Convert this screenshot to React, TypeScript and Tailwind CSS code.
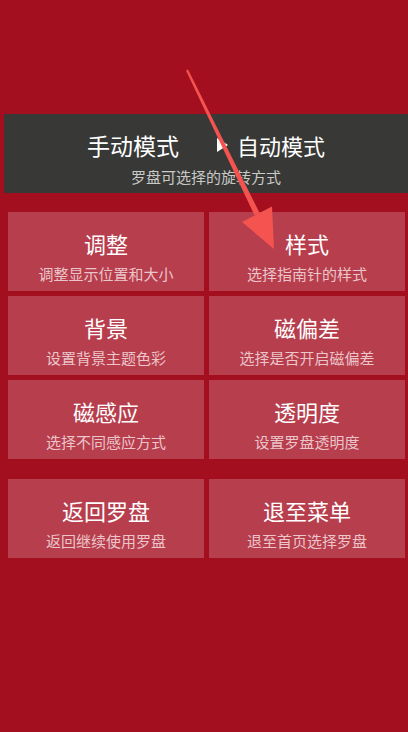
import React from "react";

const cards = [
  { t: "调整", s: "调整显示位置和大小" },
  { t: "样式", s: "选择指南针的样式" },
  { t: "背景", s: "设置背景主题色彩" },
  { t: "磁偏差", s: "选择是否开启磁偏差" },
  { t: "磁感应", s: "选择不同感应方式" },
  { t: "透明度", s: "设置罗盘透明度" },
];

const bottom = [
  { t: "返回罗盘", s: "返回继续使用罗盘" },
  { t: "退至菜单", s: "退至首页选择罗盘" },
];

function Card({ t, s }: { t: string; s: string }) {
  return (
    <div className="h-[79px] bg-[#b73e4d] flex flex-col items-center pt-[17px]">
      <div className="text-[22px] leading-[28px] text-white">{t}</div>
      <div className="mt-[7px] text-[15px] leading-[20px] text-[#ebc5ca]">{s}</div>
    </div>
  );
}

export default function App() {
  return (
    <div
      className="relative w-[408px] h-[732px] bg-[#a30f1f] overflow-hidden"
      style={{ fontFamily: '"Noto Sans CJK SC", "Noto Sans", sans-serif' }}
    >
      <div className="pt-[114px] pl-[4px]">
        <div className="h-[79px] bg-[#383836] flex flex-col items-center pt-[17px]">
          <div className="flex items-center h-[28px]">
            <span className="text-[23px] leading-[28px] text-white">手动模式</span>
            <svg className="ml-[38px]" width="11" height="14" viewBox="0 0 11 14">
              <polygon points="0,0 11,7 0,14" fill="#ffffff" />
            </svg>
            <span className="ml-[9px] text-[22px] leading-[28px] text-white">自动模式</span>
          </div>
          <div className="mt-[8px] text-[15px] leading-[20px] text-[#c9c9c7]">罗盘可选择的旋转方式</div>
        </div>
      </div>

      <div className="mt-[19px] pl-[8px] pr-[3px] grid grid-cols-2 gap-[5px]">
        {cards.map((c) => (
          <Card key={c.t} {...c} />
        ))}
      </div>
      <div className="mt-[20px] pl-[8px] pr-[3px] grid grid-cols-2 gap-[5px]">
        {bottom.map((c) => (
          <Card key={c.t} {...c} />
        ))}
      </div>

      <svg className="absolute left-0 top-0 pointer-events-none" width="408" height="732" viewBox="0 0 408 732">
        <polygon points="186,70.5 188,69.5 259.5,212.8 254.5,215.2" fill="#f5534f" />
        <polygon points="242,222 272,206.5 274,249" fill="#f5534f" />
      </svg>
    </div>
  );
}
